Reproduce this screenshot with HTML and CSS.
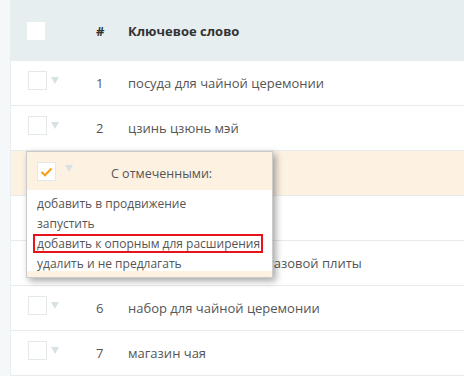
FILE: index.html
```html
<!DOCTYPE html>
<html lang="ru">
<head>
    <meta charset="UTF-8">
    <title>Ключевые слова</title>
    <link rel="stylesheet" href="styles.css">
</head>
<body>
    <div class="page">
        <div class="table">
            <div class="row head">
                <div class="cell-check"><span class="box box-head"></span></div>
                <div class="cell-num">#</div>
                <div class="cell-word">Ключевое слово</div>
            </div>

            <div class="row">
                <div class="cell-check"><span class="box"></span><span class="arrow"></span></div>
                <div class="cell-num">1</div>
                <div class="cell-word">посуда для чайной церемонии</div>
            </div>
            <div class="row">
                <div class="cell-check"><span class="box"></span><span class="arrow"></span></div>
                <div class="cell-num">2</div>
                <div class="cell-word">цзинь цзюнь мэй</div>
            </div>
            <div class="row selected">
                <div class="cell-check"><span class="box"></span><span class="arrow"></span></div>
                <div class="cell-num">3</div>
                <div class="cell-word">пуэр</div>
            </div>
            <div class="row">
                <div class="cell-check"><span class="box"></span><span class="arrow"></span></div>
                <div class="cell-num">4</div>
                <div class="cell-word">чай улун</div>
            </div>
            <div class="row">
                <div class="cell-check"><span class="box"></span><span class="arrow"></span></div>
                <div class="cell-num">5</div>
                <div class="cell-word">чугунный чайник для газовой плиты</div>
            </div>
            <div class="row">
                <div class="cell-check"><span class="box"></span><span class="arrow"></span></div>
                <div class="cell-num">6</div>
                <div class="cell-word">набор для чайной церемонии</div>
            </div>
            <div class="row">
                <div class="cell-check"><span class="box"></span><span class="arrow"></span></div>
                <div class="cell-num">7</div>
                <div class="cell-word">магазин чая</div>
            </div>

            <!-- popup for the checked rows -->
            <div class="popup">
                <div class="popup-head">
                    <span class="box checked">
                        <svg width="13" height="10" viewBox="0 0 13 10"><path d="M1.5 5 L5 8.2 L11.5 1.5" fill="none" stroke="#f5a21f" stroke-width="2.2"/></svg>
                    </span>
                    <span class="arrow"></span>
                    <span class="popup-title">С отмеченными:</span>
                </div>
                <ul class="popup-menu">
                    <li><a href="#">добавить в продвижение</a></li>
                    <li><a href="#">запустить</a></li>
                    <li><a href="#" class="marked">добавить к опорным для расширения</a></li>
                    <li><a href="#">удалить и не предлагать</a></li>
                </ul>
                <div class="popup-foot"></div>
            </div>
        </div>
    </div>
</body>
</html>
```

FILE: styles.css
```css
body {
    margin: 0;
    padding: 0;
    font-family: "Open Sans", Arial, sans-serif;
    font-size: 13px;
    color: #555;
    overflow: hidden;
}

.page {
    background-color: #f4f8f9;
    padding-left: 10px;
    height: 376px;
}

.table {
    position: relative;
    background-color: #fff;
    border-left: 1px solid #e9eef0;
}

.row {
    display: flex;
    align-items: center;
    height: 44px;
    border-bottom: 1px solid #e6ecec;
}

.row.head {
    height: 61px;
    border-bottom: none;
    background-color: #e6eef0;
    color: #333;
    font-weight: bold;
}

.row.selected {
    background-color: #fdf1e2;
}

.cell-check {
    width: 85px;
    display: flex;
    align-items: center;
    padding-left: 17px;
    box-sizing: border-box;
    margin-top: -6px;
}

.head .cell-check {
    padding-left: 16px;
    margin-top: 0;
}

.cell-num {
    width: 32px;
}

.cell-word {
    white-space: nowrap;
}

.box {
    display: inline-block;
    width: 17px;
    height: 17px;
    border: 1px solid #e3e9ea;
    background-color: #fff;
}

.box-head {
    width: 18px;
    height: 18px;
    border: none;
}

.arrow {
    display: inline-block;
    margin-left: 4px;
    border-left: 4px solid transparent;
    border-right: 4px solid transparent;
    border-top: 7px solid #d8e2e4;
}

/* Popup */
.popup {
    position: absolute;
    left: 15px;
    top: 151px;
    width: 245px;
    font-size: 12px;
    background-color: #fff;
    border: 1px solid #cbcbcb;
    box-shadow: 3px 3px 7px rgba(0, 0, 0, 0.35);
}

.popup-head {
    display: flex;
    align-items: center;
    height: 37px;
    padding-top: 1px;
    padding-left: 10px;
    background-color: #fdf1e2;
}

.box.checked {
    display: flex;
    align-items: center;
    justify-content: center;
}

.popup-head .arrow {
    margin-left: 9px;
    margin-top: -6px;
}

.popup-title {
    margin-left: 38px;
    margin-top: 3px;
    font-size: 12.5px;
}

.popup-menu {
    list-style: none;
    margin: 0;
    padding: 4px 0 0 0;
}

.popup-menu li {
    height: 20px;
    line-height: 20px;
    white-space: nowrap;
}

.popup-menu li:last-child {
    height: 17px;
}

.popup-menu a {
    display: inline-block;
    padding: 0 10px;
    text-decoration: none;
    color: #555;
}

.popup-menu a.marked {
    margin-left: 6px;
    padding: 0 1px 0 2px;
    line-height: 15px;
    border: 2px solid #e8141b;
}

.popup-foot {
    height: 6px;
    background-color: #fdf1e2;
}
```
